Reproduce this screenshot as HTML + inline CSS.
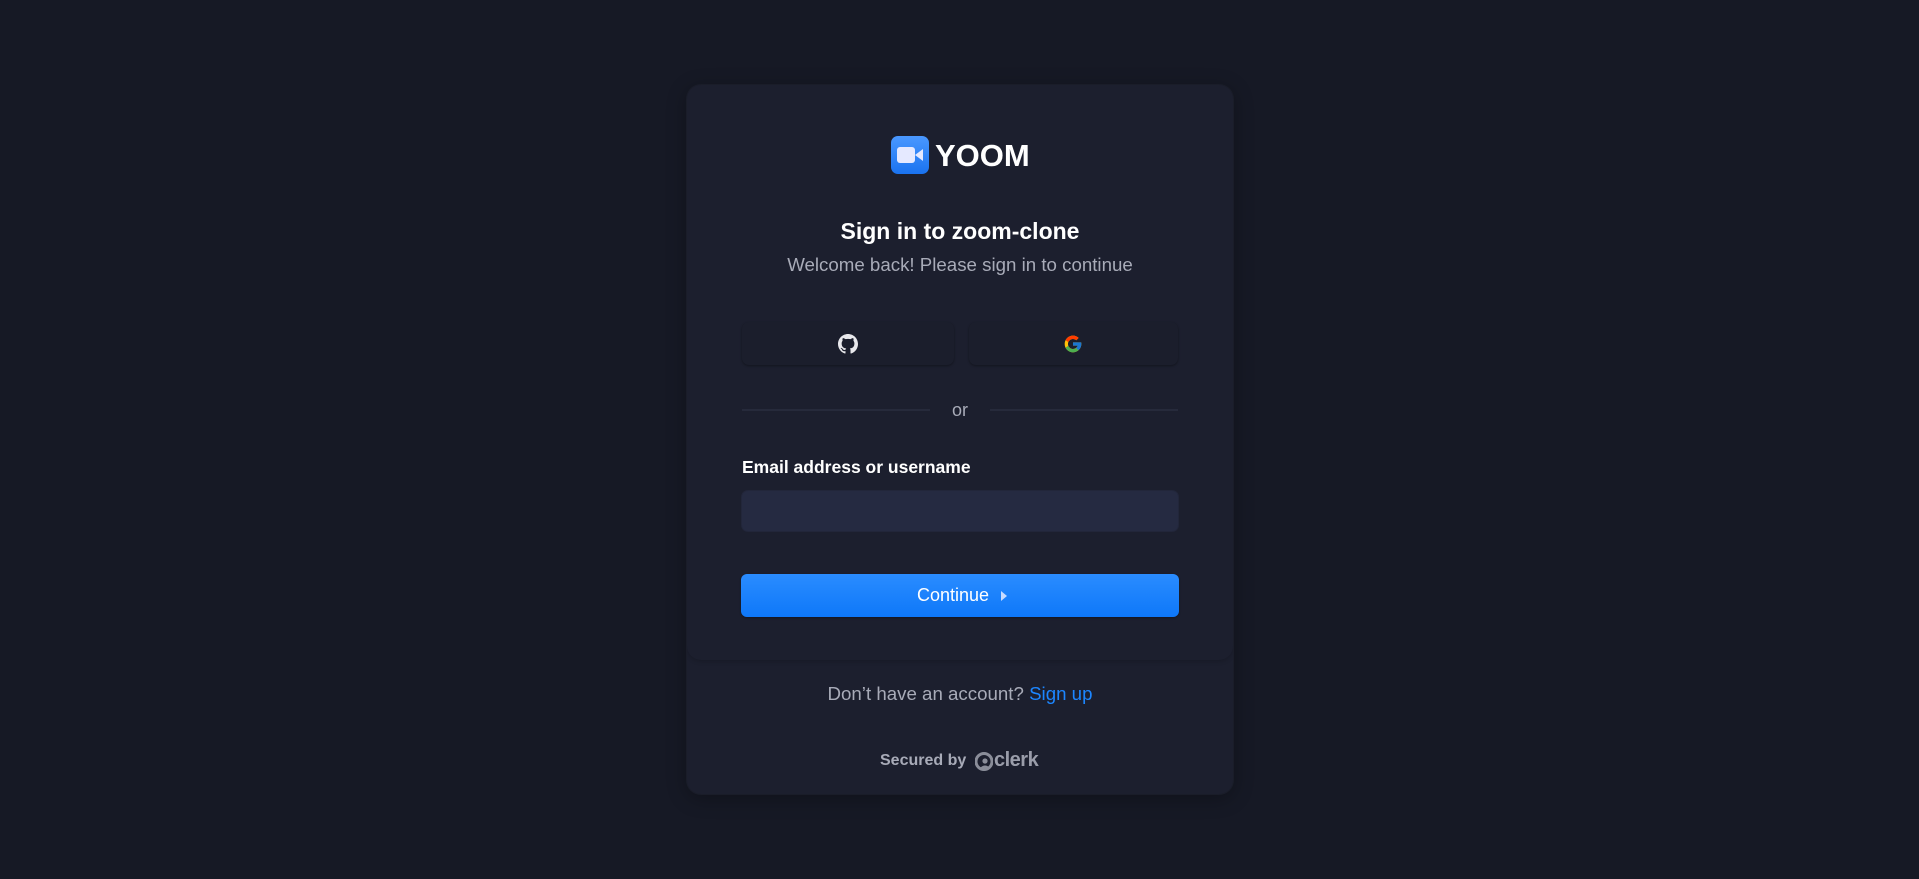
<!DOCTYPE html>
<html><head><meta charset="utf-8"><style>
*{box-sizing:border-box;margin:0;padding:0}
body{width:1919px;height:879px;background:#161925;font-family:"Liberation Sans",sans-serif;position:relative;overflow:hidden}
.card{position:absolute;left:687px;top:85px;width:546px;height:709px;background:#1c1f2e;border-radius:14px;box-shadow:0 0 0 1px #1a1d29,0 4px 20px rgba(0,0,0,.3);overflow:hidden}
.body{position:absolute;left:0;top:0;width:100%;height:575px;background:#1c1f2e;border-radius:0 0 14px 14px;box-shadow:0 2px 4px rgba(0,0,0,.15)}
.abs{position:absolute}
.c{left:0;width:100%;text-align:center}
.social{position:absolute;top:237px;height:43px;border-radius:7px;background:#1b1e2c;box-shadow:0 1px 2px rgba(0,0,0,.35)}
</style></head><body>
<div class="card">
<div class="body">
 <div class="abs" style="left:204px;top:51px;width:38px;height:38px;border-radius:7px;background:linear-gradient(#4a98ff,#1a73f0)">
  <div class="abs" style="left:6px;top:11px;width:18px;height:16px;border-radius:3px;background:#e5e9ff"></div>
  <div class="abs" style="left:24px;top:13px;width:0;height:0;border-top:6px solid transparent;border-bottom:6px solid transparent;border-right:8px solid #e5e9ff"></div>
 </div>
 <div class="abs" style="left:248px;top:51px;font-size:31px;font-weight:bold;color:#fff;line-height:40px">YOOM</div>
 <div class="abs c" style="top:131px;font-size:23px;font-weight:bold;color:#fff;line-height:30px">Sign in to zoom-clone</div>
 <div class="abs c" style="top:168px;font-size:18.7px;color:#a8abb8;line-height:24px">Welcome back! Please sign in to continue</div>
 <div class="social" style="left:55px;width:212px">
  <svg class="abs" style="left:96px;top:12px" width="20" height="20" viewBox="0 0 16 16"><path fill="#e8e8ec" d="M8 0C3.58 0 0 3.58 0 8c0 3.54 2.29 6.53 5.47 7.59.4.07.55-.17.55-.38 0-.19-.01-.82-.01-1.49-2.01.37-2.53-.49-2.69-.94-.09-.23-.48-.94-.82-1.13-.28-.15-.68-.52-.01-.53.63-.01 1.08.58 1.23.82.72 1.21 1.87.87 2.33.66.07-.52.28-.87.51-1.07-1.78-.2-3.64-.89-3.64-3.95 0-.87.31-1.59.82-2.15-.08-.2-.36-1.02.08-2.12 0 0 .67-.21 2.2.82.64-.18 1.32-.27 2-.27.68 0 1.36.09 2 .27 1.53-1.04 2.2-.82 2.2-.82.44 1.1.16 1.92.08 2.12.51.56.82 1.27.82 2.15 0 3.07-1.87 3.75-3.65 3.95.29.25.54.73.54 1.48 0 1.07-.01 1.93-.01 2.2 0 .21.15.46.55.38A8.013 8.013 0 0016 8c0-4.42-3.58-8-8-8z"/></svg>
 </div>
 <div class="social" style="left:282px;width:209px">
  <svg class="abs" style="left:94px;top:12px" width="20" height="20" viewBox="0 0 48 48"><path fill="#FFC107" d="M43.6 20.1H42V20H24v8h11.3C33.7 32.7 29.2 36 24 36c-6.6 0-12-5.4-12-12s5.4-12 12-12c3.1 0 5.8 1.2 7.9 3.1l5.7-5.7C34 6.1 29.3 4 24 4 12.9 4 4 12.9 4 24s8.9 20 20 20 20-8.9 20-20c0-1.3-.1-2.6-.4-3.9z"/><path fill="#FF3D00" d="M6.3 14.7l6.6 4.8C14.7 15.1 19 12 24 12c3.1 0 5.8 1.2 7.900 3.1l5.7-5.7C34 6.1 29.3 4 24 4 16.3 4 9.7 8.3 6.3 14.7z"/><path fill="#4CAF50" d="M24 44c5.2 0 9.9-2 13.4-5.2l-6.2-5.2C29.2 35.1 26.7 36 24 36c-5.2 0-9.6-3.3-11.3-7.9l-6.5 5C9.5 39.6 16.2 44 24 44z"/><path fill="#1976D2" d="M43.6 20.1H42V20H24v8h11.3c-.8 2.2-2.2 4.2-4.1 5.6l6.2 5.2C37 39.2 44 34 44 24c0-1.3-.1-2.6-.4-3.9z"/></svg>
 </div>
 <div class="abs" style="left:55px;top:324px;width:188px;height:2px;background:#262a3b"></div>
 <div class="abs" style="left:303px;top:324px;width:188px;height:2px;background:#262a3b"></div>
 <div class="abs c" style="top:314px;font-size:18px;color:#a8abb8;line-height:22px">or</div>
 <div class="abs" style="left:55px;top:371px;font-size:17.5px;color:#fff;line-height:22px;font-weight:bold">Email address or username</div>
 <div class="abs" style="left:55px;top:406px;width:436px;height:40px;border-radius:6px;background:#252a41;box-shadow:0 0 0 1px #22263a"></div>
 <div class="abs" style="left:54px;top:489px;width:438px;height:43px;border-radius:6px;background:linear-gradient(#2a8cff,#0e78f9);box-shadow:0 1px 2px rgba(0,0,0,.3)">
  <div class="abs c" style="top:10px;font-size:18px;color:#fff;line-height:23px;padding-right:14px">Continue</div>
  <div class="abs" style="left:260px;top:17px;width:0;height:0;border-top:5px solid transparent;border-bottom:5px solid transparent;border-left:6px solid #c8dcff"></div>
 </div>
</div>
<div class="abs c" style="top:597px;font-size:18.7px;color:#a8abb8;line-height:24px">Don’t have an account? <span style="color:#1c86ff">Sign up</span></div>
<div class="abs" style="left:193px;top:666px;font-size:16px;color:#a8abb8;line-height:20px;font-weight:bold">Secured by</div>
<svg class="abs" style="left:288px;top:667px" width="18" height="19" viewBox="0 0 18 19"><circle cx="9" cy="9.5" r="8" fill="none" stroke="#8a8d99" stroke-width="3"/><circle cx="10" cy="9" r="2.6" fill="#8a8d99"/><path d="M5 16 Q10 11 15 16" fill="#8a8d99"/></svg>
<div class="abs" style="left:307px;top:663px;font-size:20px;color:#9a9daa;line-height:24px;font-weight:bold;letter-spacing:-.5px">clerk</div>
</div>
</body></html>
